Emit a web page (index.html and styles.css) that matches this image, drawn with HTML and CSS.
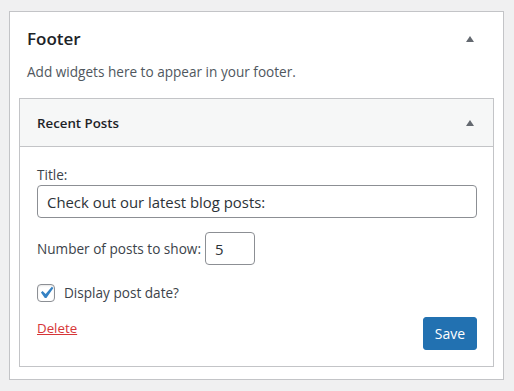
FILE: index.html
```html
<!DOCTYPE html>
<html lang="en">
<head>
<meta charset="utf-8">
<title>Footer widgets</title>
<link rel="stylesheet" href="styles.css">
</head>
<body>
<div class="sidebar">
  <div class="sidebar-head">
    <h2 class="sidebar-title">Footer</h2>
    <span class="toggle" aria-hidden="true"></span>
  </div>
  <p class="sidebar-desc">Add widgets here to appear in your footer.</p>
  <div class="widget">
    <div class="widget-head">
      <h3 class="widget-title">Recent Posts</h3>
      <span class="toggle" aria-hidden="true"></span>
    </div>
    <div class="widget-body">
      <label class="field-label" for="title">Title:</label>
      <input class="text-input" id="title" type="text" value="Check out our latest blog posts:">
      <div class="row">
        <label class="row-label" for="num">Number of posts to show:</label>
        <input class="num-input" id="num" type="text" value="5">
      </div>
      <label class="check-row">
        <span class="checkbox">
          <svg viewBox="0 0 20 20"><path d="M14.83 4.89l1.34.94-5.81 8.38H9.02L5.78 9.67l1.34-1.25 2.57 2.4z" fill="#3582c4"/></svg>
        </span>
        <span>Display post date?</span>
      </label>
      <div class="actions">
        <a class="delete" href="#">Delete</a>
        <button class="save" type="button">Save</button>
      </div>
    </div>
  </div>
</div>
</body>
</html>
```

FILE: styles.css
```css
html, body {
  margin: 0;
  padding: 0;
}
body {
  background: #f0f0f1;
  font-family: "Open Sans", "Noto Sans", "Liberation Sans", sans-serif;
  color: #1d2327;
  padding: 11px 10px 0 9px;
}
.sidebar {
  background: #fff;
  border: 1px solid #c3c4c7;
  padding: 0 9px 12px;
  height: 369px;
  box-sizing: border-box;
}
.sidebar-head {
  display: flex;
  align-items: center;
  justify-content: space-between;
  padding: 14px 20px 0 8px;
  height: 25px;
}
.sidebar-title {
  margin: 0;
  font-size: 17px;
  font-weight: 600;
  color: #1d2327;
}
.toggle {
  width: 0;
  height: 0;
  border-left: 4px solid transparent;
  border-right: 4px solid transparent;
  border-bottom: 6px solid #646970;
}
.sidebar-desc {
  margin: 0;
  padding: 12px 0 0 8px;
  font-size: 13.6px;
  color: #50575e;
  line-height: 17px;
}
.widget {
  margin-top: 18px;
  border: 1px solid #c3c4c7;
}
.widget-head {
  background: #f6f7f7;
  border-bottom: 1px solid #c3c4c7;
  height: 47px;
  display: flex;
  align-items: center;
  justify-content: space-between;
  padding: 0 19px 0 17px;
}
.widget-title {
  margin: 0;
  font-size: 13.3px;
  font-weight: 600;
  color: #1d2327;
}
.widget-body {
  padding: 19px 16px 16px 17px;
  display: flex;
  flex-direction: column;
  font-size: 13.6px;
  color: #3c434a;
}
.field-label {
  line-height: 18px;
}
.text-input {
  margin-top: 1px;
  height: 33px;
  box-sizing: border-box;
  border: 1px solid #8c8f94;
  border-radius: 4px;
  padding: 0 9px;
  font-family: inherit;
  font-size: 14.9px;
  color: #2c3338;
  width: 100%;
}
.row {
  margin-top: 14px;
  display: flex;
  align-items: center;
  gap: 4px;
}
.num-input {
  width: 50px;
  height: 33px;
  box-sizing: border-box;
  border: 1px solid #8c8f94;
  border-radius: 4px;
  padding: 0 9px;
  font-family: inherit;
  font-size: 14.9px;
  color: #2c3338;
}
.check-row {
  margin-top: 18px;
  display: flex;
  align-items: center;
  gap: 9px;
}
.checkbox {
  width: 18px;
  height: 18px;
  box-sizing: border-box;
  border: 1px solid #8c8f94;
  border-radius: 4px;
  display: flex;
  align-items: center;
  justify-content: center;
  background: #fff;
  box-shadow: inset 0 1px 2px rgba(0, 0, 0, 0.1);
}
.checkbox svg {
  width: 24px;
  height: 24px;
  flex: none;
  margin: 1px 1px 0 0;
}
.actions {
  margin-top: 15px;
  display: flex;
  justify-content: space-between;
  align-items: flex-start;
}
.delete {
  color: #d63638;
  font-size: 13.3px;
  text-decoration: underline;
  margin-top: 2px;
}
.save {
  width: 54px;
  height: 33px;
  background: #2271b1;
  border: 1px solid #2271b1;
  border-radius: 3px;
  color: #fff;
  font-family: inherit;
  font-size: 14px;
  padding: 0;
}
```
